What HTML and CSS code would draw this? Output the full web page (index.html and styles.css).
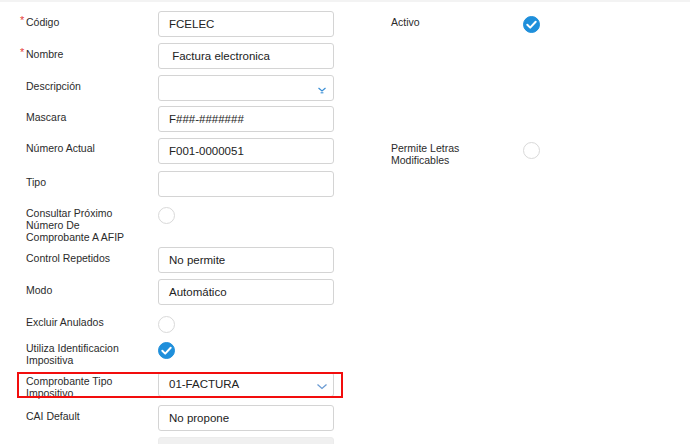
FILE: index.html
```html
<!DOCTYPE html>
<html>
<head>
<meta charset="utf-8">
<link rel="stylesheet" href="styles.css">
</head>
<body>
<div class="topbar"></div>
<form class="form">
  <div class="row">
    <label class="lbl req">Código</label>
    <div class="field">FCELEC</div>
    <span></span>
    <label class="lbl">Activo</label>
    <div class="chk-wrap center"><span class="chk on"><svg viewBox="0 0 17 17" width="17" height="17"><path d="M4.3 8.8 L7.2 11.6 L12.7 5.7" fill="none" stroke="#fff" stroke-width="2" stroke-linecap="round" stroke-linejoin="round"/></svg></span></div>
  </div>
  <div class="row">
    <label class="lbl req">Nombre</label>
    <div class="field">&nbsp;Factura electronica</div>
  </div>
  <div class="row r-tight">
    <label class="lbl">Descripción</label>
    <div class="field select">
      <svg class="chev dbl" viewBox="0 0 10 8" width="10" height="8"><path d="M1.5 2 L5 5 L8.5 2" fill="none" stroke="#3a8fd6" stroke-width="1.2"/><path d="M3.6 6.8 L6.4 6.8" stroke="#3a8fd6" stroke-width="1.1"/></svg>
    </div>
  </div>
  <div class="row">
    <label class="lbl">Mascara</label>
    <div class="field">F###-#######</div>
  </div>
  <div class="row r-loose">
    <label class="lbl">Número Actual</label>
    <div class="field">F001-0000051</div>
    <span></span>
    <label class="lbl">Permite Letras<br>Modificables</label>
    <div class="chk-wrap top"><span class="chk"></span></div>
  </div>
  <div class="row r-tipo">
    <label class="lbl">Tipo</label>
    <div class="field"></div>
  </div>
  <div class="row check r-consultar">
    <label class="lbl lt">Consultar Próximo<br>Número De<br>Comprobante A AFIP</label>
    <div class="chk-wrap top"><span class="chk"></span></div>
  </div>
  <div class="row">
    <label class="lbl">Control Repetidos</label>
    <div class="field">No permite</div>
  </div>
  <div class="row r-modo">
    <label class="lbl">Modo</label>
    <div class="field">Automático</div>
  </div>
  <div class="row check r-excluir">
    <label class="lbl lt">Excluir Anulados</label>
    <div class="chk-wrap top"><span class="chk"></span></div>
  </div>
  <div class="row check">
    <label class="lbl lt">Utiliza Identificacion<br>Impositiva</label>
    <div class="chk-wrap top"><span class="chk on"><svg viewBox="0 0 17 17" width="17" height="17"><path d="M4.3 8.8 L7.2 11.6 L12.7 5.7" fill="none" stroke="#fff" stroke-width="2" stroke-linecap="round" stroke-linejoin="round"/></svg></span></div>
  </div>
  <div class="row r-comp">
    <label class="lbl">Comprobante Tipo<br>Impositivo</label>
    <div class="field select">01-FACTURA
      <svg class="chev" viewBox="0 0 12 7" width="12" height="7"><path d="M1.5 1.5 L6 5.5 L10.5 1.5" fill="none" stroke="#6a9bd3" stroke-width="1.3"/></svg>
    </div>
  </div>
  <div class="row">
    <label class="lbl">CAI Default</label>
    <div class="field">No propone</div>
  </div>
  <div class="row">
    <span></span>
    <div class="field disabled"></div>
  </div>
  <div class="highlight"></div>
</form>
</body>
</html>
```

FILE: styles.css
```css
html, body {
  margin: 0;
  padding: 0;
  background: #fff;
  overflow: hidden;
  height: 444px;
}
body {
  font-family: "Liberation Sans", Arial, sans-serif;
  color: #333;
}
.topbar {
  height: 2px;
  background: #f3f3f3;
}
.form {
  position: relative;
  padding: 9px 0 0 26px;
}
.row {
  display: grid;
  grid-template-columns: 132px 176px 57px 132px 40px;
  align-items: start;
  margin-bottom: 6px;
}
.r-tight { margin-bottom: 5px; }
.r-loose { margin-bottom: 5px; }
.r-tipo { margin-bottom: 10px; }
.r-consultar { margin-bottom: 4px; }
.r-modo { margin-bottom: 11px; }
.r-excluir { margin-bottom: 9px; }
.r-comp { margin-bottom: 6px; }
.lbl {
  font-size: 10.5px;
  line-height: 12px;
  padding-top: 5px;
  color: #2b2b2b;
  position: relative;
}
.lbl.lt { padding-top: 0; }
.r-loose .lbl { padding-top: 4px; }
.r-comp .lbl { padding-top: 4px; line-height: 11.5px; }
.req::before {
  content: "*";
  color: #e5403a;
  position: absolute;
  left: -6px;
  top: 3px;
  font-size: 11px;
}
.field {
  box-sizing: border-box;
  height: 26px;
  border: 1px solid #d4d4d4;
  border-radius: 3px;
  padding: 0 10px;
  font-size: 11.5px;
  line-height: 24px;
  color: #222;
  position: relative;
}
.field.disabled {
  background: #f0f0f0;
  border-color: #ececec;
}
.chev {
  position: absolute;
  right: 5px;
  top: 10px;
}
.chev.dbl { top: 10px; right: 6px; }
.r-comp .field { height: 25px; line-height: 23px; }
.chk-wrap { display: flex; }
.chk-wrap.center { height: 26px; align-items: center; }
.r-loose .chk-wrap.top { padding-top: 4px; }
.chk {
  box-sizing: border-box;
  width: 17px;
  height: 17px;
  border-radius: 50%;
  border: 1px solid #d9d9d9;
  background: #fff;
  display: block;
}
.chk.on {
  background: #1f8fdb;
  border-color: #1f8fdb;
  position: relative;
}
.chk.on svg {
  position: absolute;
  left: -1px;
  top: -1px;
}
.highlight {
  position: absolute;
  left: 17px;
  top: 370px;
  width: 326px;
  height: 26px;
  box-sizing: border-box;
  border: 2px solid #f20d0d;
  pointer-events: none;
}
```
